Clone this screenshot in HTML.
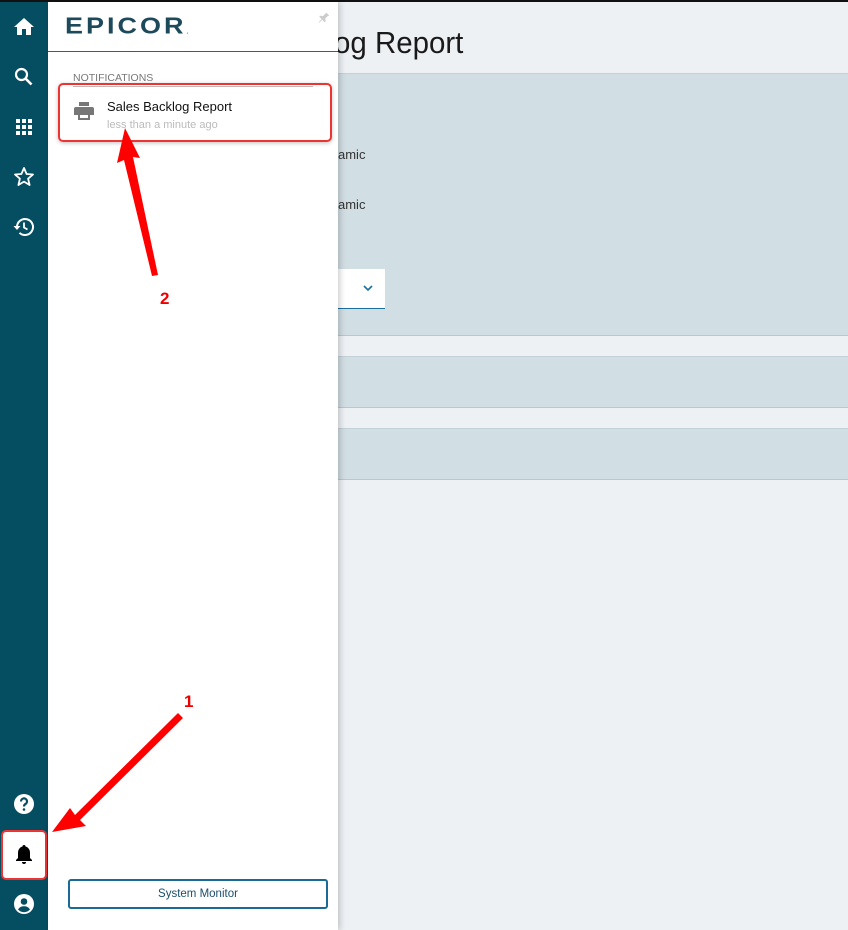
<!DOCTYPE html>
<html><head><meta charset="utf-8"><style>
*{margin:0;padding:0;box-sizing:border-box}
body{width:848px;height:930px;overflow:hidden;background:#edf1f4;font-family:"Liberation Sans",sans-serif;position:relative}
.top{position:absolute;left:0;top:0;width:848px;height:2px;background:#111}
.side{position:absolute;left:0;top:2px;width:48px;height:928px;background:#054d60}
.panel{position:absolute;left:48px;top:2px;width:290px;height:928px;background:#fff;box-shadow:2px 0 6px rgba(0,0,0,.2)}
.blk{position:absolute;left:338px;right:0;background:#d1dee3;border-bottom:1px solid #b7c8cf;border-top:1px solid #c3d2d8}
.ic{position:absolute;left:12px;width:24px;height:24px}
</style></head><body>
<div class="top"></div>
<div style="position:absolute;left:334px;top:25px;font-size:31px;color:#1a1a1a;transform:scaleX(.95);transform-origin:left">og Report</div>
<div class="blk" style="top:73px;height:51px;border-bottom-color:#9fb7c1"></div>
<div class="blk" style="top:123px;height:213px;border-top:none"></div>
<div style="position:absolute;left:338px;top:147px;font-size:13px;color:#333">amic</div>
<div style="position:absolute;left:338px;top:197px;font-size:13px;color:#333">amic</div>
<div style="position:absolute;left:338px;top:269px;width:47px;height:40px;background:#fff;border-bottom:1px solid #1a6fa0"></div>
<svg style="position:absolute;left:362px;top:283px" width="12" height="10"><path d="M2 3l4 4 4-4" stroke="#1a6fa0" stroke-width="1.6" fill="none"/></svg>
<div class="blk" style="top:356px;height:52px"></div>
<div class="blk" style="top:428px;height:52px"></div>
<div class="side">
<svg class="ic" style="top:13px" viewBox="0 0 24 24"><path d="M10 20v-6h4v6h5v-8h3L12 3 2 12h3v8z" fill="#fff"/></svg>
<svg class="ic" style="top:63px" viewBox="0 0 24 24"><circle cx="9.5" cy="9.5" r="5.5" stroke="#fff" stroke-width="2.2" fill="none"/><path d="M13.5 13.5l6 6" stroke="#fff" stroke-width="2.6"/></svg>
<svg class="ic" style="top:113px" viewBox="0 0 24 24" fill="#fff"><rect x="4" y="4" width="4" height="4"/><rect x="10" y="4" width="4" height="4"/><rect x="16" y="4" width="4" height="4"/><rect x="4" y="10" width="4" height="4"/><rect x="10" y="10" width="4" height="4"/><rect x="16" y="10" width="4" height="4"/><rect x="4" y="16" width="4" height="4"/><rect x="10" y="16" width="4" height="4"/><rect x="16" y="16" width="4" height="4"/></svg>
<svg class="ic" style="top:163px" viewBox="0 0 24 24"><path d="M12 3l2.6 6 6.4.5-4.9 4.2 1.5 6.3L12 16.6 6.4 20l1.5-6.3L3 9.5 9.4 9z" stroke="#fff" stroke-width="1.8" fill="none" stroke-linejoin="round"/></svg>
<svg class="ic" style="top:213px" viewBox="0 0 24 24"><path d="M5 12a8 8 0 1 1 2.5 5.8" stroke="#fff" stroke-width="2" fill="none"/><path d="M1.5 11h7l-3.5 4z" fill="#fff"/><path d="M12 7.5v5l3.5 2" stroke="#fff" stroke-width="1.8" fill="none"/></svg>
<svg class="ic" style="top:790px" viewBox="0 0 24 24"><circle cx="12" cy="12" r="10" fill="#fff"/><path d="M9 9.5a3 3 0 1 1 4.5 2.5c-1 .6-1.5 1.2-1.5 2.5" stroke="#054d60" stroke-width="2.2" fill="none"/><circle cx="12" cy="17.5" r="1.3" fill="#054d60"/></svg>
<div style="position:absolute;left:1px;top:828px;width:46px;height:50px;background:#fff;border:2px solid #e33;border-radius:5px"></div>
<svg class="ic" style="top:840px" viewBox="0 0 24 24"><path d="M12 3a1.5 1.5 0 0 1 1.5 1.5c3 .8 4.5 3.3 4.5 6.5v5l2 2v1H4v-1l2-2v-5c0-3.2 1.5-5.7 4.5-6.5A1.5 1.5 0 0 1 12 3zM10 20h4a2 2 0 0 1-4 0z" fill="#000"/></svg>
<svg class="ic" style="top:890px" viewBox="0 0 24 24"><circle cx="12" cy="12" r="10" fill="#fff"/><circle cx="12" cy="9.5" r="3.3" fill="#054d60"/><path d="M6 17.5c1.5-2.5 3.5-3.3 6-3.3s4.5.8 6 3.3a8 8 0 0 1-12 0z" fill="#054d60"/></svg>
</div>
<div class="panel">
<div style="position:absolute;left:17px;top:13px;font-size:27px;line-height:27px;font-weight:bold;color:#1d4a5a;letter-spacing:3px;transform:scaleY(.85);transform-origin:top">EPICOR<span style="font-size:6px;letter-spacing:0">.</span></div>
<svg style="position:absolute;left:269px;top:9px" width="14" height="14" viewBox="0 0 24 24"><path d="M16 3l5 5-3 1-4 4 1 5-2 1-4-4-5 5-1-1 5-5-4-4 1-2 5 1 4-4z" fill="#ccc"/></svg>
<div style="position:absolute;left:0;top:49px;width:290px;height:1px;background:#1a6a85"></div>
<div style="position:absolute;left:25px;top:70px;font-size:10.5px;color:#777">NOTIFICATIONS</div>
<div style="position:absolute;left:25px;top:84px;width:240px;height:1px;background:#bbb"></div>
<div style="position:absolute;left:10px;top:81px;width:274px;height:59px;border:2px solid #e33;border-radius:5px;box-shadow:0 1px 4px rgba(0,0,0,.25)"></div>
<svg style="position:absolute;left:24px;top:97px" width="24" height="24" viewBox="0 0 24 24"><path d="M7 3h10v4H7zM4 8h16a2 2 0 0 1 2 2v6h-4v5H6v-5H2v-6a2 2 0 0 1 2-2zm4 8v3h8v-3z" fill="#777"/></svg>
<div style="position:absolute;left:59px;top:97px;font-size:13px;color:#111">Sales Backlog Report</div>
<div style="position:absolute;left:59px;top:117px;font-size:11px;color:#bbb">less than a minute ago</div>
<div style="position:absolute;left:20px;top:877px;width:260px;height:30px;border:2px solid #1a6a95;border-radius:3px;text-align:center;line-height:26px;font-size:11.5px;color:#1a4f6a">System Monitor</div>
</div>
<svg style="position:absolute;left:0;top:0" width="848" height="930">
<polygon points="125,128 140,158 133,157 158,275 152,276 124,160 117,163" fill="#f00"/>
<polygon points="52,832 70,808 75,815 178,713 183,718 80,820 86,826" fill="#f00"/>
<text x="160" y="304" font-family="Liberation Sans" font-size="17" font-weight="bold" fill="#e00">2</text>
<text x="184" y="707" font-family="Liberation Sans" font-size="17" font-weight="bold" fill="#e00">1</text>
</svg>
</body></html>
